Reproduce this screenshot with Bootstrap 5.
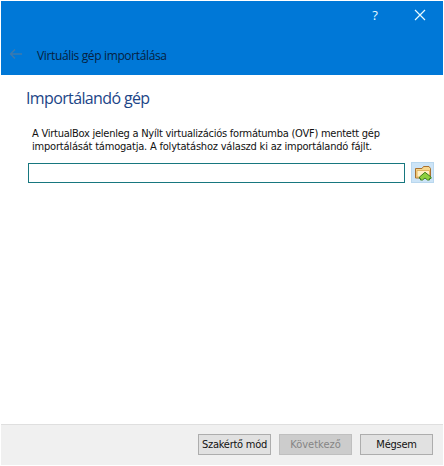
<!DOCTYPE html>
<html lang="hu">
<head>
<meta charset="utf-8">
<meta name="viewport" content="width=device-width, initial-scale=1">
<title>Virtuális gép importálása</title>
<link href="https://cdn.jsdelivr.net/npm/bootstrap@5.3.0/dist/css/bootstrap.min.css" rel="stylesheet">
<style>
body { font-family: "DejaVu Sans Condensed", "DejaVu Sans", sans-serif; font-size: 11px; line-height: 13px; color: #111; background: #fff; }
.wizard { width: 444px; height: 466px; padding: 1px; overflow: hidden; }
.wizard-top { height: 74px; background: #0078d7; }
.caption-row { height: 28px; padding-right: 17px; gap: 34px; }
.caption-row .btn { line-height: 0; color: #e8fbff; }
.help-btn { font-family: "Open Sans", sans-serif; font-size: 13px; width: 10px; }
.title-row { padding: 6px 0 0 8px; gap: 14px; height: 46px; }
.title-row svg { margin-top: -3px; }
.title-text { font-family: "Open Sans", sans-serif; font-size: 12px; line-height: 17px; letter-spacing: -.36px; color: #06213f; }
.wizard-body { padding: 13px 9px 0 25px; }
.page-title { font-family: "Open Sans", sans-serif; font-size: 16px; line-height: 20px; color: #1c4587; letter-spacing: -.63px; margin: 0 0 19px; }
.intro { margin: 0 0 10px 6px; white-space: nowrap; }
.line-a { letter-spacing: -.25px; }
.line-b { letter-spacing: -.2px; }
.file-row { margin-left: 2px; gap: 6px; }
.file-row .form-control { height: 20px; min-height: 0; border: 1px solid #17777f; padding: 0 4px; font-size: 11px; }
.browse { width: 23px; height: 21px; background: #cce4f7; border: 1px solid #b9d7ee; line-height: 0; margin-top: -1px; }
.wizard-foot { height: 41px; background: #f0f0f0; border-top: 1px solid #dfdfdf; padding: 9px 10px 0 0; gap: 8px; }
.wizard-foot .btn { width: 73px; height: 21px; padding: 0; font-size: 11px; line-height: 20px; white-space: nowrap; color: #111; background: #e1e1e1; border: 1px solid #adadad; letter-spacing: -.25px; }
.wizard-foot .btn:disabled { background: #ccc; border-color: #bfbfbf; color: #858585; opacity: 1; letter-spacing: 0; }
</style>
</head>
<body>
<div class="wizard d-flex flex-column">
  <header class="wizard-top">
    <div class="caption-row d-flex justify-content-end align-items-center">
      <button class="btn p-0 border-0 rounded-0 help-btn" aria-label="Súgó">?</button>
      <button class="btn p-0 border-0 rounded-0" aria-label="Bezárás">
        <svg width="12" height="12" viewBox="0 0 12 12"><path d="M1 1l10 10M11 1L1 11" stroke="currentColor" stroke-width="1.2" fill="none"/></svg>
      </button>
    </div>
    <div class="title-row d-flex align-items-center">
      <svg width="14" height="12" viewBox="0 0 14 12"><path d="M13 6H2M6 1.500L1.500 6 6 10.500" stroke="#3c79ae" stroke-width="1.4" fill="none"/></svg>
      <span class="title-text">Virtuális gép importálása</span>
    </div>
  </header>
  <main class="wizard-body flex-grow-1">
    <h1 class="page-title fw-normal">Importálandó gép</h1>
    <p class="intro"><span class="line-a">A VirtualBox jelenleg a Nyílt virtualizációs formátumba (OVF) mentett gép</span><br><span class="line-b">importálását támogatja. A folytatáshoz válaszd ki az importálandó fájlt.</span></p>
    <div class="file-row d-flex">
      <input type="text" class="form-control rounded-0 shadow-none" aria-label="Fájl">
      <button class="btn browse p-0 rounded-0 flex-shrink-0" aria-label="Tallózás">
        <svg width="18" height="17" viewBox="0 0 18 17">
          <path d="M1.500 14V4.500H8L9.500 2.500h5.500l1.500 2V14z" fill="#f6d68c" stroke="#a8702f"/>
          <path d="M3 13V6.500h12.500V13z" fill="#fff0c4" stroke="#dda94f" stroke-width=".8"/>
          <path d="M5.500 14.500V13L11 8.300l6 4.700v1.500h-1.500v1.500h-2L11 14l-2.500 2h-2v-1.500z" fill="#8ed03f" stroke="#3f7d20"/>
        </svg>
      </button>
    </div>
  </main>
  <footer class="wizard-foot d-flex justify-content-end">
    <button class="btn rounded-0">Szakértő mód</button>
    <button class="btn rounded-0" disabled>Következő</button>
    <button class="btn rounded-0">Mégsem</button>
  </footer>
</div>
<script src="https://cdn.jsdelivr.net/npm/bootstrap@5.3.0/dist/js/bootstrap.bundle.min.js"></script>
</body>
</html>
